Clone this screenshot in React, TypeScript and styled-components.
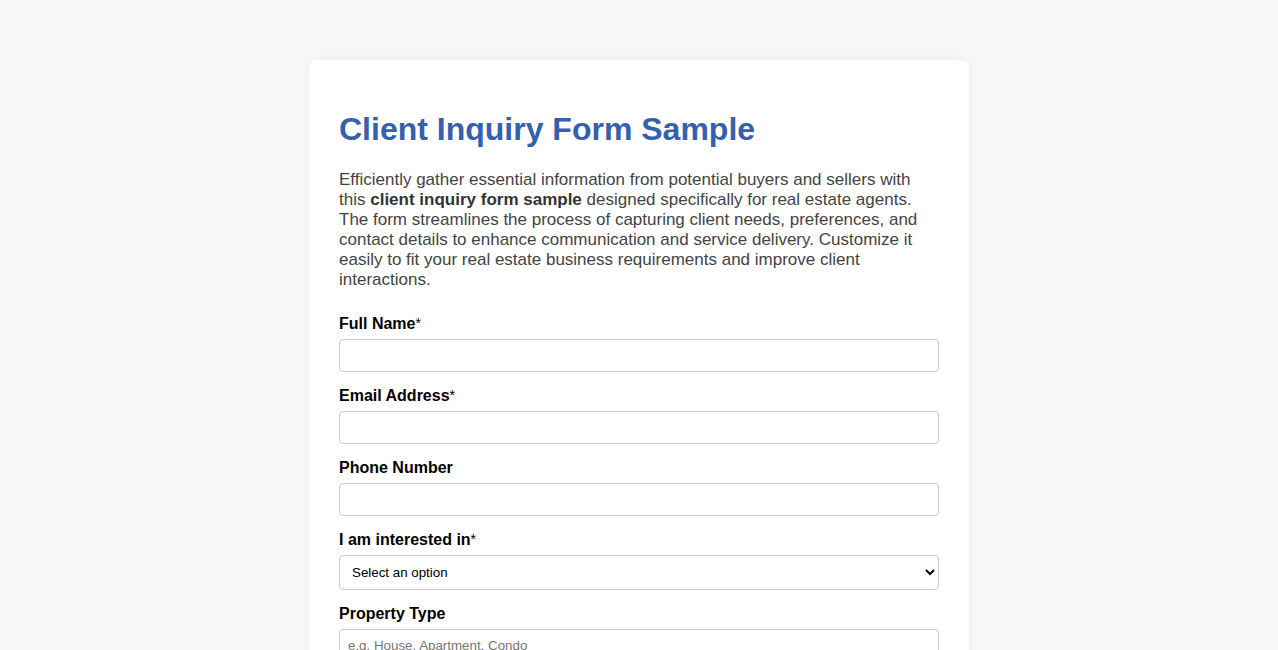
import React from "react";
import styled, { createGlobalStyle } from "styled-components";

const Global = createGlobalStyle`
  html, body { margin: 0; padding: 0; background: #f6f7f9; }
  body { font-family: "Liberation Sans", Arial, sans-serif; }
`;

const Page = styled.div`
  display: flex;
  justify-content: center;
  padding: 60px 0 40px;
`;

const Card = styled.div`
  width: 600px;
  background: #ffffff;
  border-radius: 8px;
  padding: 30px;
  box-shadow: 0 0 10px rgba(0, 0, 0, 0.04);
`;

const Title = styled.h1`
  margin: 21px 0 22px;
  font-size: 32px;
  font-weight: bold;
  color: #3560ad;
`;

const Intro = styled.p`
  margin: 0 0 25px;
  font-size: 17px;
  line-height: 20px;
  color: #444444;
  strong { color: #333333; }
`;

const Field = styled.div`
  display: flex;
  flex-direction: column;
  margin-bottom: 15px;
`;

const Label = styled.label`
  display: block;
  height: 18px;
  font-size: 16px;
  font-weight: bold;
  color: #000;
  line-height: 18px;
  margin-bottom: 6px;
`;

const Req = styled.span`
  font-weight: normal;
  font-size: 14px;
  line-height: 0;
  vertical-align: 1px;
`;

const inputBase = `
  box-sizing: border-box;
  width: 100%;
  font-family: "Liberation Sans", Arial, sans-serif;
  font-size: 13.333px;
  border: 1px solid #cccccc;
  border-radius: 4px;
  background: #fff;
  color: #000;
`;

const Input = styled.input`
  ${inputBase}
  height: 33px;
  padding: 8px;
  &::placeholder { color: #757575; }
`;

const Select = styled.select`
  ${inputBase}
  height: 35px;
  padding: 0 8px 0 8px;
`;

export default function App() {
  return (
    <>
      <Global />
      <Page>
        <Card>
          <Title>Client Inquiry Form Sample</Title>
          <Intro>
            Efficiently gather essential information from potential buyers and sellers with this{" "}
            <strong>client inquiry form sample</strong> designed specifically for real estate agents. The
            form streamlines the process of capturing client needs, preferences, and contact details to
            enhance communication and service delivery. Customize it easily to fit your real estate
            business requirements and improve client interactions.
          </Intro>
          <Field>
            <Label>Full Name<Req>*</Req></Label>
            <Input type="text" />
          </Field>
          <Field>
            <Label>Email Address<Req>*</Req></Label>
            <Input type="email" />
          </Field>
          <Field>
            <Label>Phone Number</Label>
            <Input type="tel" />
          </Field>
          <Field>
            <Label>I am interested in<Req>*</Req></Label>
            <Select defaultValue="">
              <option value="">Select an option</option>
              <option>Buying</option>
              <option>Selling</option>
              <option>Renting</option>
            </Select>
          </Field>
          <Field>
            <Label>Property Type</Label>
            <Input type="text" placeholder="e.g. House, Apartment, Condo" />
          </Field>
        </Card>
      </Page>
    </>
  );
}
